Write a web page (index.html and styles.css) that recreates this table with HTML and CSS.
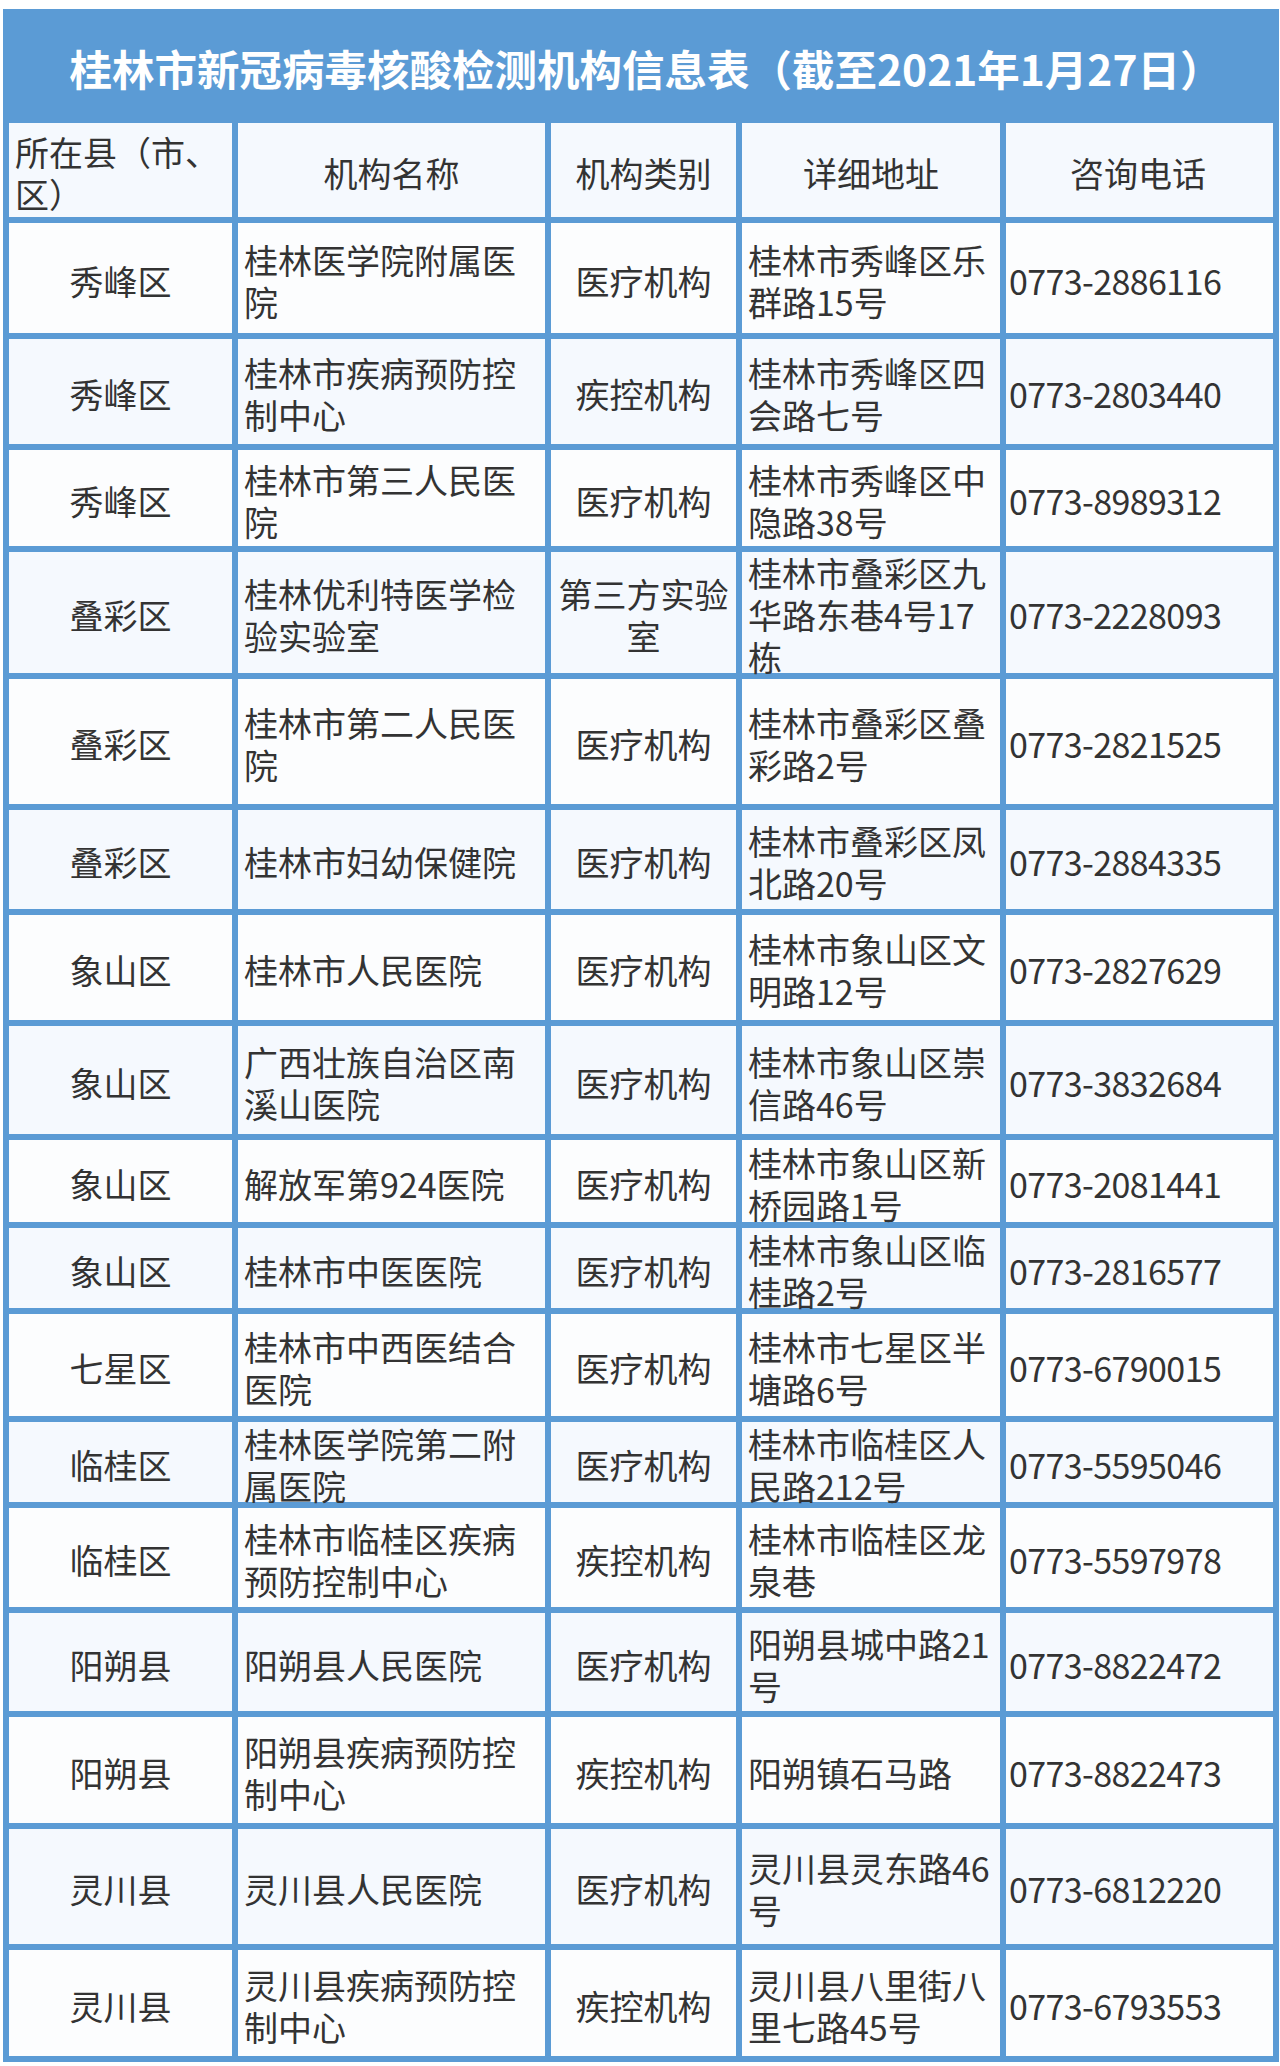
FILE: index.html
```html
<!DOCTYPE html>
<html lang="zh-CN">
<head>
<meta charset="utf-8">
<title>桂林市新冠病毒核酸检测机构信息表</title>
<link rel="stylesheet" href="styles.css">
</head>
<body>
<div class="sheet">
  <div class="title">桂林市新冠病毒核酸检测机构信息表（截至2021年1月27日）</div>
  <div class="rows">
    <div class="row head r0">
      <div class="c c1 left">所在县（市、区）</div>
      <div class="c c2 center">机构名称</div>
      <div class="c c3">机构类别</div>
      <div class="c c4 center">详细地址</div>
      <div class="c c5 center">咨询电话</div>
    </div>
    <div class="row r1"><div class="c c1">秀峰区</div><div class="c c2">桂林医学院附属医院</div><div class="c c3">医疗机构</div><div class="c c4">桂林市秀峰区乐群路15号</div><div class="c c5">0773-2886116</div></div>
    <div class="row r2"><div class="c c1">秀峰区</div><div class="c c2">桂林市疾病预防控制中心</div><div class="c c3">疾控机构</div><div class="c c4">桂林市秀峰区四会路七号</div><div class="c c5">0773-2803440</div></div>
    <div class="row r3"><div class="c c1">秀峰区</div><div class="c c2">桂林市第三人民医院</div><div class="c c3">医疗机构</div><div class="c c4">桂林市秀峰区中隐路38号</div><div class="c c5">0773-8989312</div></div>
    <div class="row r4"><div class="c c1">叠彩区</div><div class="c c2">桂林优利特医学检验实验室</div><div class="c c3">第三方实验室</div><div class="c c4">桂林市叠彩区九华路东巷4号17栋</div><div class="c c5">0773-2228093</div></div>
    <div class="row r5"><div class="c c1">叠彩区</div><div class="c c2">桂林市第二人民医院</div><div class="c c3">医疗机构</div><div class="c c4">桂林市叠彩区叠彩路2号</div><div class="c c5">0773-2821525</div></div>
    <div class="row r6"><div class="c c1">叠彩区</div><div class="c c2">桂林市妇幼保健院</div><div class="c c3">医疗机构</div><div class="c c4">桂林市叠彩区凤北路20号</div><div class="c c5">0773-2884335</div></div>
    <div class="row r7"><div class="c c1">象山区</div><div class="c c2">桂林市人民医院</div><div class="c c3">医疗机构</div><div class="c c4">桂林市象山区文明路12号</div><div class="c c5">0773-2827629</div></div>
    <div class="row r8"><div class="c c1">象山区</div><div class="c c2">广西壮族自治区南溪山医院</div><div class="c c3">医疗机构</div><div class="c c4">桂林市象山区崇信路46号</div><div class="c c5">0773-3832684</div></div>
    <div class="row r9"><div class="c c1">象山区</div><div class="c c2">解放军第924医院</div><div class="c c3">医疗机构</div><div class="c c4">桂林市象山区新桥园路1号</div><div class="c c5">0773-2081441</div></div>
    <div class="row r10"><div class="c c1">象山区</div><div class="c c2">桂林市中医医院</div><div class="c c3">医疗机构</div><div class="c c4">桂林市象山区临桂路2号</div><div class="c c5">0773-2816577</div></div>
    <div class="row r11"><div class="c c1">七星区</div><div class="c c2">桂林市中西医结合医院</div><div class="c c3">医疗机构</div><div class="c c4">桂林市七星区半塘路6号</div><div class="c c5">0773-6790015</div></div>
    <div class="row r12"><div class="c c1">临桂区</div><div class="c c2">桂林医学院第二附属医院</div><div class="c c3">医疗机构</div><div class="c c4">桂林市临桂区人民路212号</div><div class="c c5">0773-5595046</div></div>
    <div class="row r13"><div class="c c1">临桂区</div><div class="c c2">桂林市临桂区疾病预防控制中心</div><div class="c c3">疾控机构</div><div class="c c4">桂林市临桂区龙泉巷</div><div class="c c5">0773-5597978</div></div>
    <div class="row r14"><div class="c c1">阳朔县</div><div class="c c2">阳朔县人民医院</div><div class="c c3">医疗机构</div><div class="c c4">阳朔县城中路21号</div><div class="c c5">0773-8822472</div></div>
    <div class="row r15"><div class="c c1">阳朔县</div><div class="c c2">阳朔县疾病预防控制中心</div><div class="c c3">疾控机构</div><div class="c c4">阳朔镇石马路</div><div class="c c5">0773-8822473</div></div>
    <div class="row r16"><div class="c c1">灵川县</div><div class="c c2">灵川县人民医院</div><div class="c c3">医疗机构</div><div class="c c4">灵川县灵东路46号</div><div class="c c5">0773-6812220</div></div>
    <div class="row r17"><div class="c c1">灵川县</div><div class="c c2">灵川县疾病预防控制中心</div><div class="c c3">疾控机构</div><div class="c c4">灵川县八里街八里七路45号</div><div class="c c5">0773-6793553</div></div>
  </div>
</div>
</body>
</html>
```
FILE: styles.css
```css
html, body {
  margin: 0;
  padding: 0;
  background: #ffffff;
}

body {
  font-family: "Noto Sans CJK SC", "Noto Sans", sans-serif;
  color: #333333;
}

.sheet {
  box-sizing: border-box;
  width: 1276px;
  margin: 9px 0 0 3px;
  padding: 0 6px 6px 6px;
  background: #5b9bd5;
}

.title {
  height: 108px;
  box-sizing: border-box;
  padding-top: 8px;
  padding-left: 10px;
  display: flex;
  align-items: center;
  justify-content: center;
  color: #ffffff;
  font-size: 42.5px;
  font-weight: 700;
  white-space: nowrap;
}

.rows {
  display: flex;
  flex-direction: column;
  gap: 6px;
  margin-top: 6px;
}

.row {
  display: grid;
  grid-template-columns: 223px 307px 185px 258px 1fr;
  grid-template-rows: minmax(0, 1fr);
  gap: 6px;
}

.c {
  box-sizing: border-box;
  display: flex;
  align-items: center;
  padding: 5px 6px 0 6px;
  font-size: 34px;
  line-height: 42px;
  overflow: visible;
  min-width: 0;
  min-height: 0;
  height: 100%;
}

.row:nth-child(odd) .c { background: #f5f9fe; }
.row:nth-child(even) .c { background: #fcfdfe; }

.c1, .c3, .center { justify-content: center; text-align: center; }
.c1.left { justify-content: flex-start; text-align: left; }
.c5 { padding-left: 3px; letter-spacing: -0.6px; }
.c5.center { letter-spacing: 0; }

.r0 { height: 94px; }
.r1 { height: 110px; }
.r2 { height: 105px; }
.r3 { height: 96px; }
.r4 { height: 121px; }
.r5 { height: 125px; }
.r6 { height: 99px; }
.r7 { height: 105px; }
.r8 { height: 108px; }
.r9 { height: 82px; }
.r10 { height: 80px; }
.r11 { height: 102px; }
.r12 { height: 80px; }
.r13 { height: 99px; }
.r14 { height: 98px; }
.r15 { height: 106px; }
.r16 { height: 115px; }
.r17 { height: 106px; }
```
